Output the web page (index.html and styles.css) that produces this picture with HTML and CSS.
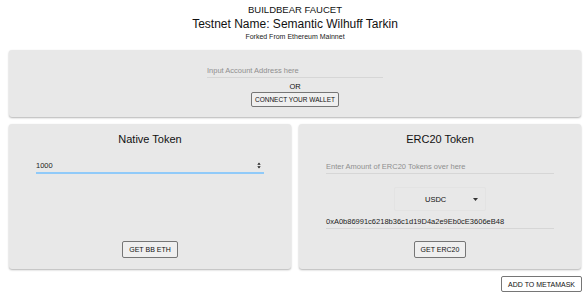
FILE: index.html
```html
<!DOCTYPE html>
<html lang="en">
<head>
    <meta charset="UTF-8">
    <meta name="viewport" content="width=device-width, initial-scale=1.0">
    <title>BuildBear Faucet</title>
    <link rel="stylesheet" href="styles.css">
</head>
<body>
    <header class="header">
        <h1 class="brand">BUILDBEAR FAUCET</h1>
        <h2 class="testnet">Testnet Name: Semantic Wilhuff Tarkin</h2>
        <p class="forked">Forked From Ethereum Mainnet</p>
    </header>

    <!-- Account section -->
    <section class="card connect">
        <input class="field account" type="text" placeholder="Input Account Address here">
        <div class="or">OR</div>
        <button class="btn wallet" type="button">CONNECT YOUR WALLET</button>
    </section>

    <div class="tokens">
        <section class="card token">
            <h3 class="card-title">Native Token</h3>
            <div class="field number focused">
                <span>1000</span>
                <svg class="spin" width="4" height="7" viewBox="0 0 4 7"><path d="M0.3 2.8 L2 0.6 L3.7 2.8 Z M0.3 4.2 L2 6.4 L3.7 4.2 Z" fill="#222"/></svg>
            </div>
            <button class="btn push" type="button">GET BB ETH</button>
        </section>

        <section class="card token">
            <h3 class="card-title">ERC20 Token</h3>
            <input class="field" type="text" placeholder="Enter Amount of ERC20 Tokens over here">
            <div class="select">
                <span>USDC</span>
                <svg class="caret" width="5" height="3" viewBox="0 0 5 3"><path d="M0 0 L5 0 L2.5 3 Z" fill="#333"/></svg>
            </div>
            <div class="field address">0xA0b86991c6218b36c1d19D4a2e9Eb0cE3606eB48</div>
            <button class="btn push" type="button">GET ERC20</button>
        </section>
    </div>

    <div class="footer">
        <button class="btn light" type="button">ADD TO METAMASK</button>
    </div>
</body>
</html>
```

FILE: styles.css
```css
body {
    font-family: "Liberation Sans", Arial, sans-serif;
    background-color: #fff;
    color: #111;
    margin: 0;
    padding: 0 7px 0 9px;
}
.header {
    text-align: center;
    padding-top: 4px;
}
.brand {
    font-size: 9.5px;
    font-weight: normal;
    margin: 0;
    line-height: 12px;
}
.testnet {
    font-size: 12px;
    font-weight: normal;
    margin: 0;
    line-height: 17px;
}
.forked {
    font-size: 7px;
    margin: 0;
    line-height: 8px;
    color: #222;
}
.card {
    background-color: #e8e8e8;
    border-radius: 3px;
    box-shadow: 0 1px 2px rgba(0, 0, 0, 0.3);
    box-sizing: border-box;
}
.connect {
    margin-top: 9px;
    height: 67px;
    display: flex;
    flex-direction: column;
    align-items: center;
    padding-top: 13px;
}
.field {
    font-family: inherit;
    font-size: 7.5px;
    color: #222;
    background: transparent;
    border: none;
    border-bottom: 1px solid #d6d6d6;
    height: 15px;
    padding: 0;
    outline: none;
    box-sizing: border-box;
    display: flex;
    align-items: center;
}
.field::placeholder {
    color: #8f8f8f;
}
.account {
    width: 176px;
}
.or {
    font-size: 7.5px;
    line-height: 11px;
    margin-top: 3px;
}
.btn {
    font-family: inherit;
    font-size: 7px;
    color: #111;
    background-color: #efefef;
    border: 1px solid #767676;
    border-radius: 2px;
    padding: 0 5px;
    height: 15px;
    cursor: pointer;
}
.wallet {
    font-size: 6.5px;
    padding: 0 3px;
}
.tokens {
    display: grid;
    grid-template-columns: 1fr 1fr;
    gap: 8px;
    margin-top: 7px;
}
.token {
    height: 145px;
    display: flex;
    flex-direction: column;
    align-items: center;
    padding: 8px 27px 11px;
}
.card-title {
    font-size: 11px;
    font-weight: normal;
    margin: 0;
    line-height: 15px;
}
.token .field {
    width: 100%;
    margin-top: 12px;
}
.number {
    justify-content: space-between;
    padding-right: 3px;
}
.focused {
    border-bottom: 2px solid #90caf9;
}
.select {
    width: 92px;
    height: 24px;
    margin-top: 13px;
    border: 1px solid #e3e3e3;
    border-radius: 2px;
    box-sizing: border-box;
    display: flex;
    align-items: center;
    justify-content: space-between;
    font-size: 7.5px;
    padding: 0 7px 0 30px;
}
.token .address {
    font-size: 7.5px;
    margin-top: 3px;
}
.push {
    margin-top: auto;
    height: 17px;
    padding: 0 6px;
}
.footer {
    display: flex;
    justify-content: flex-end;
    margin-top: 7px;
    margin-right: -1px;
}
.light {
    background-color: #fff;
    height: 16px;
    padding: 0 6px;
}
```
